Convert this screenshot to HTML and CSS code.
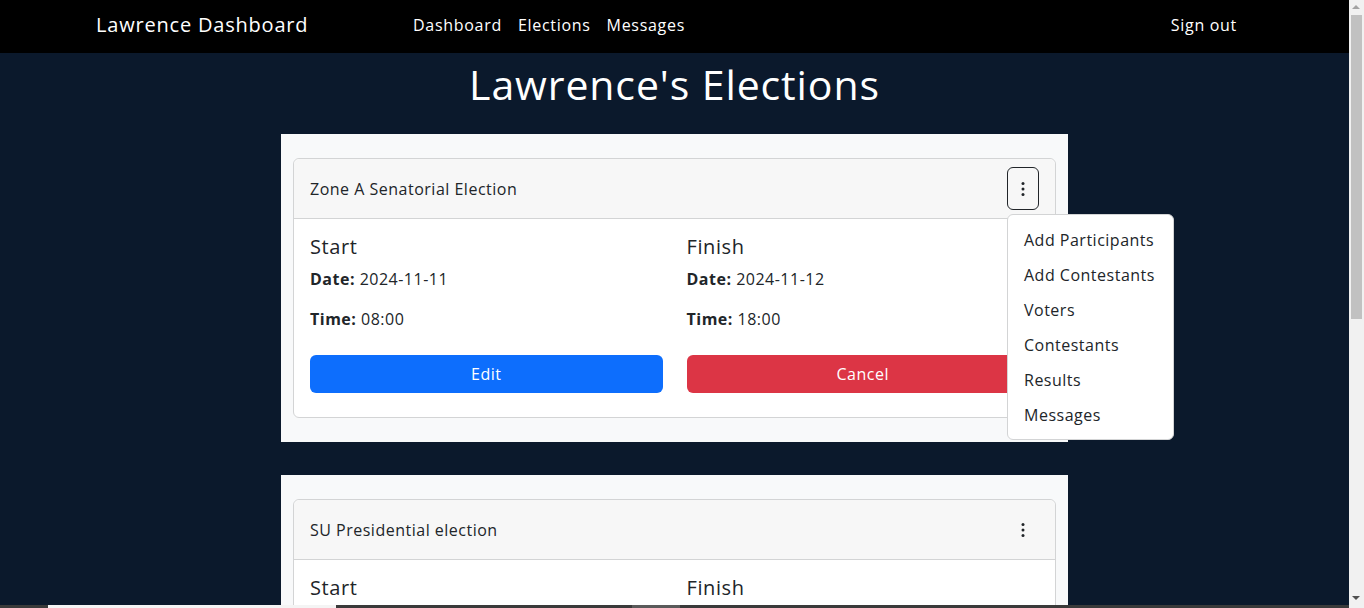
FILE: index.html
```html
<!DOCTYPE html>
<html lang="en">
<head>
<meta charset="utf-8">
<title>Lawrence Dashboard</title>
<link rel="stylesheet" href="styles.css">
</head>
<body>
<nav class="navbar">
  <a class="brand" href="#">Lawrence Dashboard</a>
  <ul class="nav-links">
    <li><a href="#">Dashboard</a></li>
    <li><a href="#">Elections</a></li>
    <li><a href="#">Messages</a></li>
  </ul>
  <a class="signout" href="#">Sign out</a>
</nav>

<main class="main">
  <h1 class="title">Lawrence's Elections</h1>

  <section class="wrapper">
    <div class="card">
      <div class="card-header">
        <span class="card-title">Zone A Senatorial Election</span>
        <div class="menu">
          <button class="kebab active" type="button" aria-label="More">
            <svg width="16" height="16" viewBox="0 0 16 16" fill="currentColor"><circle cx="8" cy="2.5" r="1.5"/><circle cx="8" cy="8" r="1.5"/><circle cx="8" cy="13.5" r="1.5"/></svg>
          </button>
          <ul class="dropdown">
            <li><a href="#">Add Participants</a></li>
            <li><a href="#">Add Contestants</a></li>
            <li><a href="#">Voters</a></li>
            <li><a href="#">Contestants</a></li>
            <li><a href="#">Results</a></li>
            <li><a href="#">Messages</a></li>
          </ul>
        </div>
      </div>
      <div class="card-body">
        <div class="col">
          <h5>Start</h5>
          <p><b>Date:</b> 2024-11-11</p>
          <p><b>Time:</b> 08:00</p>
          <button class="btn btn-blue" type="button">Edit</button>
        </div>
        <div class="col">
          <h5>Finish</h5>
          <p><b>Date:</b> 2024-11-12</p>
          <p><b>Time:</b> 18:00</p>
          <button class="btn btn-red" type="button">Cancel</button>
        </div>
      </div>
    </div>
  </section>

  <section class="wrapper">
    <div class="card">
      <div class="card-header">
        <span class="card-title">SU Presidential election</span>
        <div class="menu">
          <button class="kebab" type="button" aria-label="More">
            <svg width="16" height="16" viewBox="0 0 16 16" fill="currentColor"><circle cx="8" cy="2.5" r="1.5"/><circle cx="8" cy="8" r="1.5"/><circle cx="8" cy="13.5" r="1.5"/></svg>
          </button>
        </div>
      </div>
      <div class="card-body">
        <div class="col">
          <h5>Start</h5>
          <p><b>Date:</b> 2024-12-02</p>
          <p><b>Time:</b> 09:00</p>
          <button class="btn btn-blue" type="button">Edit</button>
        </div>
        <div class="col">
          <h5>Finish</h5>
          <p><b>Date:</b> 2024-12-03</p>
          <p><b>Time:</b> 17:00</p>
          <button class="btn btn-red" type="button">Cancel</button>
        </div>
      </div>
    </div>
  </section>

  <section class="wrapper">
    <div class="card">
      <div class="card-header">
        <span class="card-title">Faculty Representative Election</span>
        <div class="menu">
          <button class="kebab" type="button" aria-label="More">
            <svg width="16" height="16" viewBox="0 0 16 16" fill="currentColor"><circle cx="8" cy="2.5" r="1.5"/><circle cx="8" cy="8" r="1.5"/><circle cx="8" cy="13.5" r="1.5"/></svg>
          </button>
        </div>
      </div>
      <div class="card-body">
        <div class="col">
          <h5>Start</h5>
          <p><b>Date:</b> 2025-01-15</p>
          <p><b>Time:</b> 08:00</p>
          <button class="btn btn-blue" type="button">Edit</button>
        </div>
        <div class="col">
          <h5>Finish</h5>
          <p><b>Date:</b> 2025-01-16</p>
          <p><b>Time:</b> 16:00</p>
          <button class="btn btn-red" type="button">Cancel</button>
        </div>
      </div>
    </div>
  </section>
</main>

<div class="scrollbar" aria-hidden="true">
  <span class="arrow arrow-up"></span>
  <span class="thumb"></span>
  <span class="arrow arrow-down"></span>
</div>
<div class="taskstrip" aria-hidden="true">
  <span class="seg seg-white"></span>
  <span class="seg seg-gray"></span>
</div>
</body>
</html>
```

FILE: styles.css
```css
* { box-sizing: border-box; }

html, body {
  margin: 0;
  padding: 0;
}

body {
  background: #0b192c;
  font-family: "Open Sans", "Noto Sans", Arial, sans-serif;
  font-size: 16px;
  line-height: 1.5;
  letter-spacing: 0.5px;
  color: #212529;
  margin-right: 15px;
}

a { text-decoration: none; color: inherit; }

.navbar {
  height: 53px;
  background: #000;
  display: flex;
  align-items: center;
  padding: 0 104px 4px 96px;
  color: #fff;
}

.brand {
  font-size: 20px;
  letter-spacing: 0.8px;
  width: 309px;
  flex: none;
}

.nav-links {
  list-style: none;
  margin: 0;
  padding: 0;
  display: flex;
  flex: 1;
}

.nav-links a,
.signout {
  display: block;
  padding: 8px;
  font-size: 16px;
  letter-spacing: 0.7px;
}

.main {
  padding-bottom: 1px;
}

.title {
  margin: 7px 0 26px;
  text-align: center;
  color: #fff;
  font-size: 41px;
  font-weight: 400;
  letter-spacing: 0.9px;
  line-height: 48px;
}

.wrapper {
  width: 787px;
  margin: 0 auto 33px;
  background: #f8f9fa;
  padding: 24px 12px;
}

.card {
  background: #fff;
  border: 1px solid #d3d4d5;
  border-radius: 6px;
}

.card-header {
  display: flex;
  align-items: center;
  justify-content: space-between;
  padding: 8px 16px;
  background: #f7f7f7;
  border-bottom: 1px solid #d3d4d5;
  border-radius: 6px 6px 0 0;
}

.card-title {
  font-size: 16px;
}

.menu {
  position: relative;
}

.kebab {
  width: 32px;
  height: 43px;
  display: flex;
  align-items: center;
  justify-content: center;
  background: transparent;
  border: 1px solid transparent;
  border-radius: 6px;
  color: #212529;
  padding: 0;
}

.kebab.active {
  border-color: #212529;
}

.dropdown {
  position: absolute;
  top: 47px;
  left: 0;
  width: 167px;
  margin: 0;
  padding: 7px 0;
  list-style: none;
  background: #fff;
  border: 1px solid #d3d4d5;
  border-radius: 6px;
  z-index: 10;
}

.dropdown a {
  display: block;
  padding: 5.5px 16px;
  line-height: 24px;
  white-space: nowrap;
}

.card-body {
  display: flex;
  gap: 24px;
  padding: 16px 16px 24px;
}

.col {
  flex: 1;
  min-width: 0;
}

.col h5 {
  margin: 0 0 8px;
  font-size: 20px;
  font-weight: 400;
  line-height: 24px;
  letter-spacing: 0.6px;
}

.col p {
  margin: 0 0 24px;
}

.col p:first-of-type {
  margin-bottom: 16px;
}

.btn {
  display: block;
  width: 100%;
  height: 38px;
  border: none;
  border-radius: 6px;
  color: #fff;
  font-family: inherit;
  font-size: 16px;
  letter-spacing: 0.5px;
}

.btn-blue { background: #0d6efd; }
.btn-red { background: #dc3545; }

/* simulated browser chrome */
.scrollbar {
  position: fixed;
  top: 0;
  right: 0;
  width: 15px;
  height: 100%;
  background: #f1f1f1;
  z-index: 50;
}

.thumb {
  position: absolute;
  top: 15px;
  left: 2px;
  width: 11px;
  height: 304px;
  background: #c1c1c1;
}

.arrow {
  position: absolute;
  left: 3px;
  width: 0;
  height: 0;
  border-left: 4.5px solid transparent;
  border-right: 4.5px solid transparent;
}

.arrow-up {
  top: 5px;
  border-bottom: 4px solid #a3a3a3;
}

.arrow-down {
  bottom: 8px;
  border-top: 4px solid #505050;
}

.taskstrip {
  position: fixed;
  left: 0;
  bottom: 0;
  width: 1349px;
  height: 3px;
  background: #3a3a3a;
  z-index: 40;
}

.seg {
  position: absolute;
  top: 0;
  height: 3px;
}

.seg-white {
  left: 48px;
  width: 288px;
  background: #f4f4f4;
}

.seg-gray {
  left: 632px;
  width: 48px;
  background: #5a5a5a;
}
```
